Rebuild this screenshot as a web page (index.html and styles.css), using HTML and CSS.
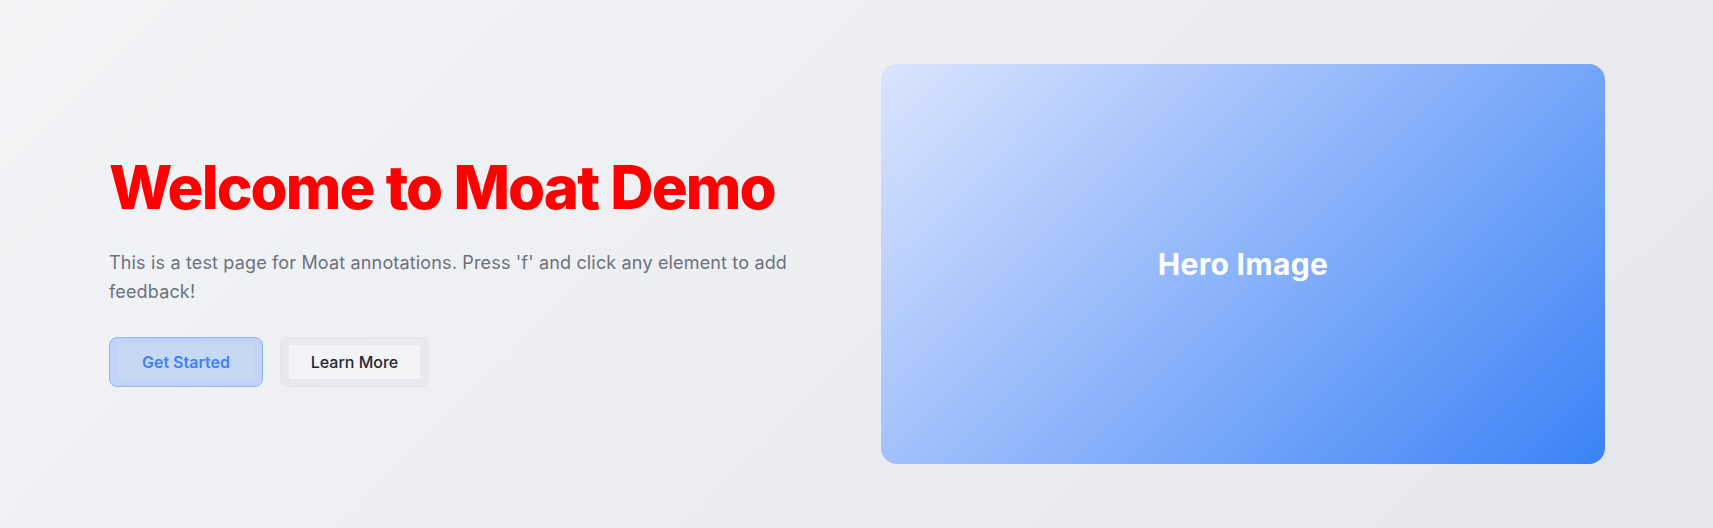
FILE: index.html
```html
<!DOCTYPE html>
<html lang="en">
<head>
<meta charset="utf-8">
<title>Moat Demo</title>
<link rel="stylesheet" href="styles.css">
</head>
<body>
<section class="hero">
  <div class="hero-inner">
    <div class="hero-text">
      <h1 class="title">Welcome to Moat Demo</h1>
      <p class="lead">This is a test page for Moat annotations. Press 'f' and click any element to add feedback!</p>
      <div class="actions">
        <button class="btn btn-primary"><span class="btn-face">Get Started</span></button>
        <button class="btn btn-secondary"><span class="btn-face">Learn More</span></button>
      </div>
    </div>
    <div class="hero-media">
      <span class="media-label">Hero Image</span>
    </div>
  </div>
</section>
</body>
</html>
```
FILE: styles.css
```css
* { box-sizing: border-box; }
html, body { margin: 0; padding: 0; }
body {
  font-family: Inter, "Noto Sans", "Liberation Sans", sans-serif;
  background: linear-gradient(135deg, #f3f4f6 0%, #e5e7eb 100%);
  min-height: 528px;
}
.hero { padding: 64px 108px 64px 109px; }
.hero-inner {
  display: grid;
  grid-template-columns: 1fr 1fr;
  gap: 48px;
  align-items: center;
}
.hero-text {
  display: flex;
  flex-direction: column;
  padding-top: 16px;
}
.title {
  margin: 0;
  font-size: 60px;
  line-height: 1;
  font-weight: 800;
  color: #ff0000;
  letter-spacing: -1.95px;
  word-spacing: 1px;
}
.lead {
  margin: 32px 0 0;
  font-size: 18px;
  line-height: 28.4px;
  color: #6b7280;
  letter-spacing: 0.16px;
}
.actions { display: flex; gap: 17px; margin-top: 31px; }
.btn {
  font: inherit;
  padding: 7px 8px;
  border-radius: 8px;
  cursor: pointer;
  display: flex;
}
.btn-face {
  display: block;
  width: 100%;
  height: 34px;
  line-height: 34px;
  font-size: 16px;
  font-weight: 500;
  text-align: center;
}
.btn-primary {
  width: 154px;
  background: #c1d3f6;
  border: 1px solid #93b5f4;
}
.btn-primary .btn-face {
  background: #c7d8f4;
  color: #3b82f6;
  font-weight: 600;
}
.btn-secondary {
  width: 149px;
  background: #e8e9ec;
  border: 1px solid #e4e5e8;
}
.btn-secondary .btn-face {
  background: #f3f4f6;
  color: #1f2937;
}
.hero-media {
  height: 400px;
  border-radius: 16px;
  background: linear-gradient(135deg, #dbe4fe 0%, #3b82f6 100%);
  display: flex;
  align-items: center;
  justify-content: center;
}
.media-label {
  color: #ffffff;
  font-size: 30px;
  font-weight: 700;
  letter-spacing: 0.3px;
}
```
